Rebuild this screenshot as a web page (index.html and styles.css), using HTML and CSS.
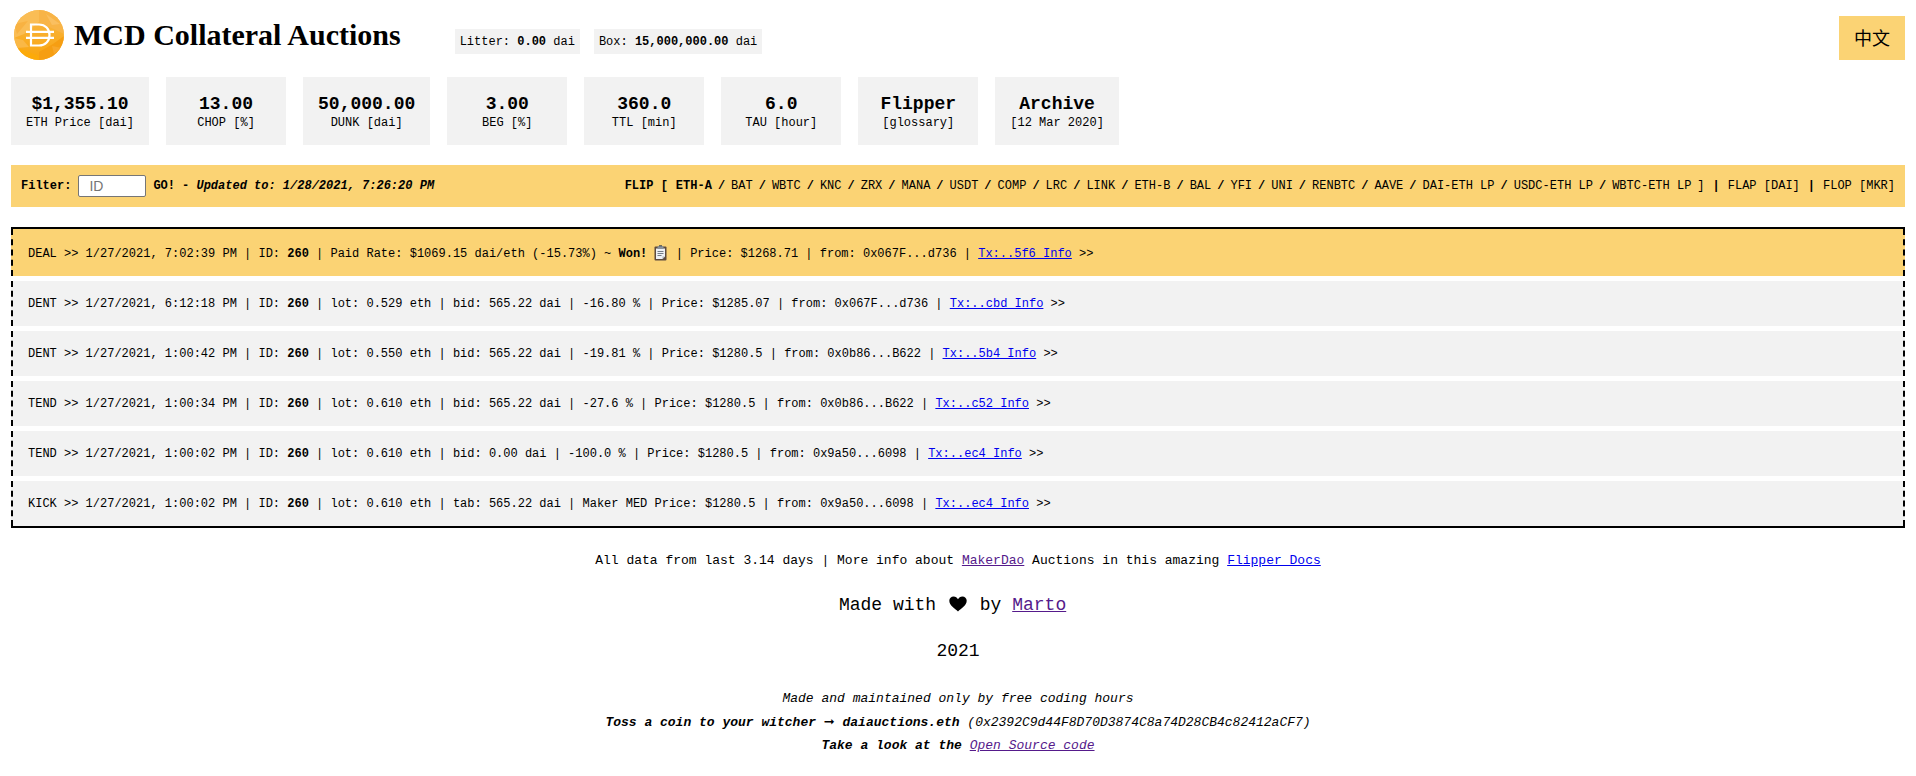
FILE: index.html
```html
<!DOCTYPE html>
<html lang="en">
<head>
<meta charset="utf-8">
<title>MCD Collateral Auctions</title>
<link rel="stylesheet" href="styles.css">
</head>
<body>
<header class="header">
  <svg class="logo" viewBox="0 0 50 50" aria-hidden="true">
    <defs>
      <clipPath id="coin"><circle cx="25" cy="25" r="25"/></clipPath>
      <linearGradient id="gold" x1="0" y1="0" x2="0" y2="1">
        <stop offset="0" stop-color="#f9b84a"/>
        <stop offset="1" stop-color="#f9a50d"/>
      </linearGradient>
    </defs>
    <g clip-path="url(#coin)">
      <rect width="50" height="50" fill="url(#gold)"/>
      <path d="M0 0h25v12L10 24 0 28z" fill="#fabd55"/>
      <path d="M25 0h25v24L25 12z" fill="#f8b447"/>
      <path d="M32 4l14 10-8 1z" fill="#fabf60"/>
      <path d="M0 14l14-3L3 24z" fill="#f8b242"/>
      <path d="M0 28l9 2 6 7-12 1z" fill="#fab846"/>
      <path d="M50 26v24H25V42l14-8z" fill="#f69e12"/>
      <path d="M38 36l10 2-8 6z" fill="#f8a72a"/>
      <path d="M4 38l21 8v4H0z" fill="#fcaa0a"/>
    </g>
    <path d="M17 21.700V14.500h8c6.500 0 10.500 4.500 10.500 10.500S31.500 35.500 25 35.500h-8V21.700M12 21.800h28M12 27.800h28" fill="none" stroke="#fff" stroke-width="2.200"/>
  </svg>
  <h1 class="title">MCD Collateral Auctions</h1>
  <div class="chips">
    <span class="chip">Litter: <b>0.00</b> dai</span>
    <span class="chip">Box: <b>15,000,000.00</b> dai</span>
  </div>
  <a class="lang" href="#zh" lang="zh">中文</a>
</header>

<main>
  <section class="cards">
    <div class="card"><b class="value">$1,355.10</b><span>ETH Price [dai]</span></div>
    <div class="card"><b class="value">13.00</b><span>CHOP [%]</span></div>
    <div class="card"><b class="value">50,000.00</b><span>DUNK [dai]</span></div>
    <div class="card"><b class="value">3.00</b><span>BEG [%]</span></div>
    <div class="card"><b class="value">360.0</b><span>TTL [min]</span></div>
    <div class="card"><b class="value">6.0</b><span>TAU [hour]</span></div>
    <a class="card" href="#glossary"><b class="value">Flipper</b><span>[glossary]</span></a>
    <a class="card" href="#archive"><b class="value">Archive</b><span>[12 Mar 2020]</span></a>
  </section>

  <div class="bar">
    <form class="filter">
      <label for="auction-id">Filter:</label>
      <input class="id-input" id="auction-id" type="text" placeholder="ID">
      <button class="go" type="button">GO!</button>
      <span>- <i>Updated to: 1/28/2021, 7:26:20 PM</i></span>
    </form>
    <nav class="nav">
      <b class="pipe">FLIP [</b><a href="#eth-a"><b>ETH-A</b></a><b>/</b><a href="#bat">BAT</a><b>/</b><a href="#wbtc">WBTC</a><b>/</b><a href="#knc">KNC</a><b>/</b><a href="#zrx">ZRX</a><b>/</b><a href="#mana">MANA</a><b>/</b><a href="#usdt">USDT</a><b>/</b><a href="#comp">COMP</a><b>/</b><a href="#lrc">LRC</a><b>/</b><a href="#link">LINK</a><b>/</b><a href="#eth-b">ETH-B</a><b>/</b><a href="#bal">BAL</a><b>/</b><a href="#yfi">YFI</a><b>/</b><a href="#uni">UNI</a><b>/</b><a href="#renbtc">RENBTC</a><b>/</b><a href="#aave">AAVE</a><b>/</b><a href="#dai-eth">DAI-ETH LP</a><b>/</b><a href="#usdc-eth">USDC-ETH LP</a><b>/</b><a href="#wbtc-eth">WBTC-ETH LP</a><span>]</span><b class="pipe">|</b><a href="#flap">FLAP [DAI]</a><b class="pipe">|</b><a href="#flop">FLOP [MKR]</a>
    </nav>
  </div>

  <section class="log">
    <div class="row row-deal">DEAL &gt;&gt; 1/27/2021, 7:02:39 PM | ID: <b>260</b> | Paid Rate: $1069.15 dai/eth (-15.73%) ~ <b>Won!</b> <svg class="clipboard" viewBox="0 0 16 16" aria-hidden="true"><rect x="1.500" y="1.500" width="12" height="14" rx="1" fill="#5d4b3e"/><path d="M3 3.500h9v8l-2.500 2.500H3z" fill="#eef1f5"/><path d="M12 11.500H9.500V14z" fill="#a9b0b8"/><rect x="4.500" y="1" width="6" height="3" rx="1" fill="#8a929b"/><path d="M6 .8h3" stroke="#4b5057" stroke-width="1.200"/><path d="M4.500 6.500h6M4.500 8.500h6M4.500 10.500h4" stroke="#747c86"/></svg> | Price: $1268.71 | from: 0x067F...d736 | <a href="#5f6">Tx:..5f6 Info</a> &gt;&gt;</div>
    <div class="row">DENT &gt;&gt; 1/27/2021, 6:12:18 PM | ID: <b>260</b> | lot: 0.529 eth | bid: 565.22 dai | -16.80 % | Price: $1285.07 | from: 0x067F...d736 | <a href="#cbd">Tx:..cbd Info</a> &gt;&gt;</div>
    <div class="row">DENT &gt;&gt; 1/27/2021, 1:00:42 PM | ID: <b>260</b> | lot: 0.550 eth | bid: 565.22 dai | -19.81 % | Price: $1280.5 | from: 0x0b86...B622 | <a href="#5b4">Tx:..5b4 Info</a> &gt;&gt;</div>
    <div class="row">TEND &gt;&gt; 1/27/2021, 1:00:34 PM | ID: <b>260</b> | lot: 0.610 eth | bid: 565.22 dai | -27.6 % | Price: $1280.5 | from: 0x0b86...B622 | <a href="#c52">Tx:..c52 Info</a> &gt;&gt;</div>
    <div class="row">TEND &gt;&gt; 1/27/2021, 1:00:02 PM | ID: <b>260</b> | lot: 0.610 eth | bid: 0.00 dai | -100.0 % | Price: $1280.5 | from: 0x9a50...6098 | <a href="#ec4">Tx:..ec4 Info</a> &gt;&gt;</div>
    <div class="row">KICK &gt;&gt; 1/27/2021, 1:00:02 PM | ID: <b>260</b> | lot: 0.610 eth | tab: 565.22 dai | Maker MED Price: $1280.5 | from: 0x9a50...6098 | <a href="#ec4-kick">Tx:..ec4 Info</a> &gt;&gt;</div>
  </section>
</main>

<footer class="footer">
  <p>All data from last 3.14 days | More info about <a class="seen" href="#makerdao">MakerDao</a> Auctions in this amazing <a href="#docs">Flipper Docs</a></p>
  <p class="big made">Made with <svg class="heart" viewBox="0 0 18 16" role="img" aria-label="love"><path d="M9 15.500C6 12.500.3 9.500.3 4.800.3 2.200 2.200.4 4.600.4 6.600.4 8.200 1.500 9 3.300 9.800 1.500 11.400.4 13.400.4c2.400 0 4.300 1.800 4.300 4.400C17.700 9.500 12 12.500 9 15.500z"/></svg> by <a class="seen" href="#marto">Marto</a>&nbsp;</p>
  <p class="big">2021</p>
  <p class="credits">Made and maintained only by free coding hours<br><b>Toss a coin to your witcher <span class="arrow">➞</span> daiauctions.eth</b> (0x2392C9d44F8D70D3874C8a74D28CB4c82412aCF7)<br><b>Take a look at the</b> <a class="seen" href="#source">Open Source code</a></p>
</footer>
</body>
</html>
```
FILE: styles.css
```css
* { box-sizing: border-box; }

body {
  margin: 0 11px;
  background: #fff;
  color: #000;
  font: 12px/15px Consolas, "Liberation Mono", "Noto Sans CJK SC", monospace;
}

a { color: #0000ee; }
a.seen { color: #551a8b; }

.header {
  display: flex;
  align-items: flex-end;
  padding: 10px 0 17px 3px;
}
.logo { width: 50px; height: 50px; }
.title {
  margin: 0 54px 0 10px;
  font: bold 30px/50px "Liberation Serif", serif;
}
.chips { display: flex; gap: 14px; margin-bottom: 6px; }
.chip { padding: 6px 5px 4px; background: #f2f2f2; }
.lang {
  margin-left: auto;
  padding: 9px 15px 11px;
  background: #fbd374;
  color: #000;
  font: 18px/24px "Noto Sans CJK SC", sans-serif;
  text-decoration: none;
}

.cards { display: flex; flex-wrap: wrap; gap: 17px; }
.card {
  display: flex;
  flex-direction: column;
  align-items: center;
  min-width: 120px;
  padding: 15px 15px 14px;
  background: #f2f2f2;
  color: #000;
  text-decoration: none;
}
.value { font-size: 18px; line-height: 24px; }

.bar {
  display: flex;
  flex-wrap: wrap;
  justify-content: space-between;
  align-items: center;
  margin: 20px 0;
  padding: 10px;
  background: #fbd374;
}
.filter { display: flex; align-items: center; gap: 7px; font-weight: bold; }
.id-input {
  width: 68px;
  height: 22px;
  padding: 0 10px;
  border: 1px solid #767676;
  border-radius: 2px;
  background: #fff;
  font: 14px "Liberation Sans", sans-serif;
}
.id-input::placeholder { color: #757575; }
.go {
  padding: 0;
  border: 0;
  background: none;
  color: #000;
  font: inherit;
}
.nav { display: flex; flex-wrap: wrap; gap: 6px; line-height: 22px; }
.nav a { color: #000; text-decoration: none; }
.pipe { margin: 0 2px; }

.log {
  display: flex;
  flex-direction: column;
  gap: 5px;
  border: solid #000;
  border-width: 2px 0;
}
.row {
  padding: 16px 15px 14px;
  border: dashed #000;
  border-width: 0 2px;
  background: #f2f2f2;
}
.row-deal { padding-top: 18px; background: #fbd374; }
.clipboard { width: 16px; height: 16px; margin: -4px 0 -2px -2px; vertical-align: middle; }

.footer {
  padding: 21px 0;
  font-size: 13px;
  line-height: 24px;
  text-align: center;
}
.footer p { margin: 0 0 22px; }
.footer .big { font-size: 18px; }
.footer .made { margin-top: -2px; }
.footer .credits { margin: 24px 0 0; font-style: italic; line-height: 23px; }
.heart { width: 18px; height: 16px; margin: 0 2px; vertical-align: -2px; }
.arrow { font-family: "DejaVu Sans", sans-serif; font-style: normal; }
```
